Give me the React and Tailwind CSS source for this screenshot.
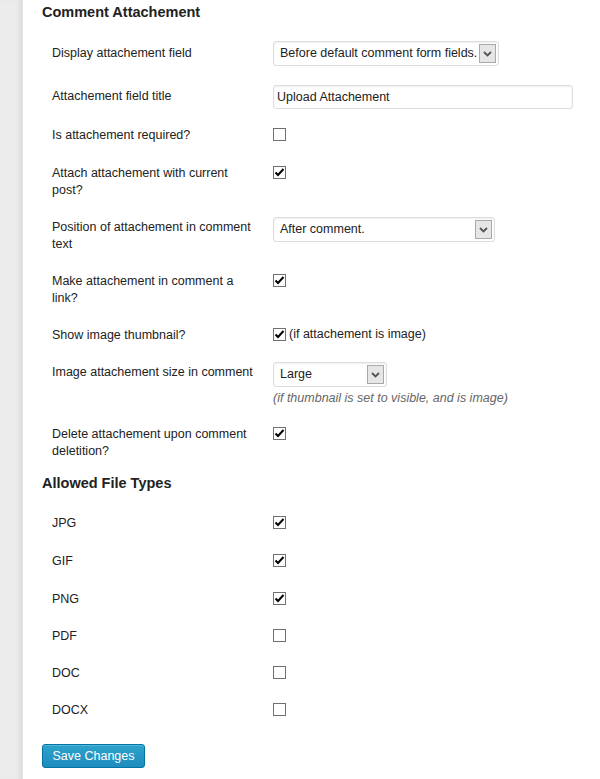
import React from "react";

const font = { fontFamily: '"Liberation Sans", Arial, sans-serif' };

function Chevron() {
  return (
    <svg width="9" height="6" viewBox="0 0 9 6">
      <path d="M1 1 L4.5 4.5 L8 1" fill="none" stroke="#555" strokeWidth="1.8" />
    </svg>
  );
}

function Select({ value, width }) {
  return (
    <div
      className="relative flex items-center h-[25px] border border-[#dddddd] rounded-[3px] bg-white pl-[6px] text-[12.5px] text-[#222] shadow-[inset_0_1px_2px_rgba(0,0,0,0.07)]"
      style={{ width }}
    >
      <span className="whitespace-nowrap">{value}</span>
      <div className="absolute right-[2px] top-[2px] w-[17px] h-[19px] bg-[#e6e6e6] border border-[#a9a9a9] flex items-center justify-center">
        <Chevron />
      </div>
    </div>
  );
}

function Checkbox({ checked }) {
  return (
    <div className="w-[13px] h-[13px] border border-[#707070] bg-white flex items-center justify-center shrink-0">
      {checked && (
        <svg width="11" height="11" viewBox="0 0 11 11">
          <path d="M1.5 5.5 L4 8 L9.5 2" fill="none" stroke="#000" strokeWidth="2" />
        </svg>
      )}
    </div>
  );
}

function Row({ label, h, fieldTop, children }) {
  return (
    <div className="flex" style={{ height: h }}>
      <div className="w-[202px] ml-[29px] pt-[11px] text-[12.5px] leading-[17px] text-[#222]">{label}</div>
      <div className="ml-[19px]" style={{ paddingTop: fieldTop }}>
        {children}
      </div>
    </div>
  );
}

export default function App() {
  const files = [
    ["JPG", true],
    ["GIF", true],
    ["PNG", true],
    ["PDF", false],
    ["DOC", false],
    ["DOCX", false],
  ];
  return (
    <div className="flex w-[600px] h-[779px] bg-white overflow-hidden" style={font}>
      <div className="w-[23px] shrink-0 bg-[#ececec] shadow-[inset_-4px_0_4px_-2px_rgba(0,0,0,0.08)] border-r border-[#e2e2e2]" />
      <div className="flex-1">
        <div className="h-[34px] pt-[3px] pl-[19px] text-[14.5px] leading-[18px] font-bold text-[#222]">
          Comment Attachement
        </div>
        <Row label="Display attachement field" h={43} fieldTop={7}>
          <Select value="Before default comment form fields." width={226} />
        </Row>
        <Row label="Attachement field title" h={39} fieldTop={8}>
          <div className="w-[300px] h-[24px] border border-[#dddddd] rounded-[3px] bg-white pl-[3px] flex items-center text-[12.5px] text-[#222] shadow-[inset_0_1px_2px_rgba(0,0,0,0.07)]">
            Upload Attachement
          </div>
        </Row>
        <Row label="Is attachement required?" h={38} fieldTop={12}>
          <Checkbox checked={false} />
        </Row>
        <Row label="Attach attachement with current post?" h={54} fieldTop={12}>
          <Checkbox checked />
        </Row>
        <Row label="Position of attachement in comment text" h={54} fieldTop={9}>
          <Select value="After comment." width={222} />
        </Row>
        <Row label="Make attachement in comment a link?" h={54} fieldTop={12}>
          <Checkbox checked />
        </Row>
        <Row label="Show image thumbnail?" h={37} fieldTop={12}>
          <div className="flex items-center">
            <Checkbox checked />
            <span className="ml-[3px] text-[12.5px] leading-[13px] text-[#222]">(if attachement is image)</span>
          </div>
        </Row>
        <Row label="Image attachement size in comment" h={62} fieldTop={9}>
          <Select value="Large" width={114} />
          <div className="mt-[3px] text-[12.5px] leading-[17px] italic text-[#666]">
            (if thumbnail is set to visible, and is image)
          </div>
        </Row>
        <Row label="Delete attachement upon comment deletition?" h={54} fieldTop={12}>
          <Checkbox checked />
        </Row>
        <div className="h-[35px] pt-[5px] pl-[19px] text-[14.5px] leading-[18px] font-bold text-[#222]">
          Allowed File Types
        </div>
        {files.map(([name, c], i) => (
          <Row key={name} label={name} h={i === 0 || i === 1 ? 38 : 37} fieldTop={12}>
            <Checkbox checked={c} />
          </Row>
        ))}
        <div className="pt-[15px] pl-[19px]">
          <button className="h-[24px] w-[103px] rounded-[3px] border border-[#0074a2] bg-gradient-to-b from-[#2ea2cc] to-[#1e8cbe] text-white text-[12.5px] leading-[20px] shadow-[inset_0_1px_0_rgba(120,200,230,0.5)]">
            Save Changes
          </button>
        </div>
      </div>
    </div>
  );
}
